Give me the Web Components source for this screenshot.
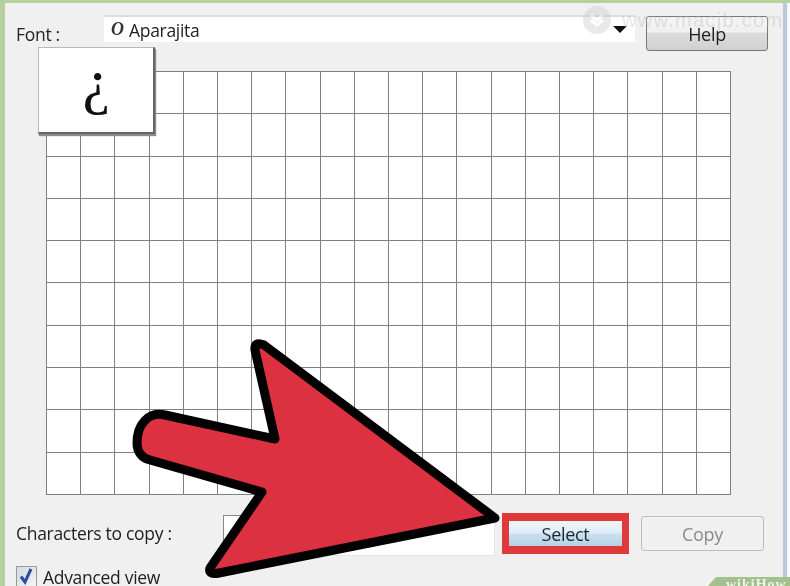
<!DOCTYPE html>
<html><head><meta charset="utf-8"><style>
html,body{margin:0;padding:0;background:#f0f0f0}
</style></head><body>
<char-window></char-window>
<template id="btn"><style>
:host{display:flex;align-items:center;justify-content:center;box-sizing:border-box;font:18px/16px "Open Sans","Noto Sans",sans-serif;color:#222;letter-spacing:-.3px;
border:1.5px solid #777;border-radius:3px;background:linear-gradient(#f4f4f4 0,#f0f0f0 45%,#dcdcdc 50%,#d0d0d0 100%)}
:host([disabled]){color:#8a8a8a;border-color:#bdbdbd;background:#f0f0f0}
:host([active]){border:0;border-radius:0;color:#1c2733;background:linear-gradient(#eef5fa 0,#dfeef7 45%,#c8dfee 55%,#b4d2e6 100%)}
</style><slot></slot></template>
<script>
function def(name,html){customElements.define(name,class extends HTMLElement{constructor(){super();const s=this.attachShadow({mode:'open'});s.innerHTML=html;}});}
customElements.define('win-button',class extends HTMLElement{constructor(){super();this.attachShadow({mode:'open'}).append(document.getElementById('btn').content.cloneNode(true));}});
customElements.define('char-grid',class extends HTMLElement{constructor(){super();const s=this.attachShadow({mode:'open'});
s.innerHTML=`<style>:host{display:grid;box-sizing:border-box;width:685px;height:424px;grid-template-columns:repeat(20,1fr);grid-template-rows:repeat(10,1fr);border-left:1.5px solid #808080;border-top:1.5px solid #808080;background:#fff}
i{display:block;border-right:1.5px solid #808080;border-bottom:1.5px solid #808080}</style>`+'<i></i>'.repeat(200);}});
def('font-select',`<style>:host{display:flex;align-items:center;box-sizing:border-box;width:531px;height:27px;background:#fff;border-top:2px solid #dcdcdc;padding:0 7px;font:17.5px "Open Sans","Noto Sans",sans-serif;color:#222;letter-spacing:-.3px}
b{font:italic bold 18px "Liberation Serif",serif;width:16px;color:#333;margin-top:-1px}
span{flex:1;margin-left:2px}
svg{display:block}</style><b>O</b><span>Aparajita</span><svg width="16" height="9" viewBox="0 0 16 9"><path d="M1 1H15L8 8Z" fill="#111"/></svg>`);
def('check-box',`<style>:host{display:inline-block;box-sizing:border-box;width:21px;height:21px;border:1.5px solid #9a9a9a;background:linear-gradient(135deg,#d4d8de,#f4f4f4)}svg{display:block}</style>
<svg width="18" height="18" viewBox="0 0 18 18"><path d="M4 9.5L8 15L14 2" fill="none" stroke="#2a4f9e" stroke-width="3"/></svg>`);
def('char-zoom',`<style>:host{position:absolute;left:38px;top:47px;box-sizing:border-box;width:117px;height:87px;background:#fff;border:1px solid #b8b8b8;border-right:2px solid #666;border-bottom:2px solid #666;box-shadow:1px 2px 1px #8a8a8a;display:flex;align-items:center;justify-content:center;font:62px/62px "Liberation Serif",serif;color:#111;padding-bottom:18px}</style>¿`);
def('big-arrow',`<style>:host{position:absolute;left:0;top:0;width:790px;height:586px;pointer-events:none}svg{display:block}</style>
<svg width="790" height="586" viewBox="0 0 790 586"><path d="M255 350Q254 341 264 345L495 518L219 573Q208 575 210 568L262 492L150 460C142 458 137 452 137 443C137 425 148 411 165 415L275 439Z" fill="#db3140" stroke="#000" stroke-width="9" stroke-linejoin="round"/></svg>`);
def('water-mark',`<style>:host{position:absolute;left:583px;top:6px;display:flex;align-items:center;gap:11px;opacity:.36;color:#b8b8b8;font:20px/10px "Liberation Sans",sans-serif;letter-spacing:1.3px}svg{display:block}</style>
<svg width="28" height="28" viewBox="0 0 28 28"><circle cx="14" cy="14" r="14" fill="#c4c4c4"/><path d="M8 9l6 5 6-5M8 14l6 5 6-5" fill="none" stroke="#fff" stroke-width="3"/></svg><span>www.macjb.com</span>`);
def('wiki-corner',`<style>:host{position:absolute;right:0;bottom:0;width:82px;height:9px;background:#a3c08e;clip-path:polygon(8px 0,100% 0,100% 100%,0 100%);color:#eef5e8;font:bold 14px "Liberation Serif",serif;overflow:hidden;padding-left:18px;box-sizing:border-box;letter-spacing:1px}</style>wikiHow`);
def('char-window',`<style>
:host{display:flex;flex-direction:column;position:relative;box-sizing:border-box;width:790px;height:586px;overflow:hidden;background:#f0f0f0;padding:15px 0 0 16px;font:17.5px "Open Sans","Noto Sans",sans-serif;color:#222;letter-spacing:-.3px;filter:blur(.35px)}
.t{position:absolute;left:0;top:0;right:0;height:3px;background:#b6d0a2}
.l{position:absolute;left:0;top:0;bottom:0;width:5px;background:#b6d0a2}
.r{position:absolute;left:783px;top:3px;bottom:0;width:4px;background:#b9c9dc}
.r2{position:absolute;left:787px;top:3px;bottom:0;width:3px;background:#f8f8f8}
.top{display:flex;flex:none;height:56px;align-items:flex-start}
.lab{width:88px;margin-top:7px}
win-button.help{width:122px;height:35px;margin:1px 0 0 11px}
char-grid{margin-left:30px;flex:none}
.bot{display:flex;flex:none;margin-top:18px;height:41px;align-items:flex-start}
.bl{width:207px;margin-top:8px}
.inp{box-sizing:border-box;width:272px;height:41px;margin-top:2px;background:#fff;border-top:1.5px solid #888;border-left:1.5px solid #888;border-right:1px solid #e6e6e6;border-bottom:1px solid #e6e6e6;}
.red{box-sizing:border-box;width:127px;height:41px;margin-left:7px;border:solid #e0393a;border-width:8px 7px;display:flex}
.red win-button{flex:1}
.copy{width:123px;height:35px;margin:3px 0 0 12px}
.chk{display:flex;flex:none;align-items:center;gap:6px;margin-top:12px;height:21px}
</style>
<div class="t"></div><div class="l"></div><div class="r"></div><div class="r2"></div>
<div class="top"><div class="lab">Font :</div><font-select></font-select><win-button class="help">Help</win-button></div>
<char-grid></char-grid>
<div class="bot"><div class="bl">Characters to copy :</div><div class="inp"></div><div class="red"><win-button active>Select</win-button></div><win-button class="copy" disabled>Copy</win-button></div>
<div class="chk"><check-box></check-box><span>Advanced view</span></div>
<char-zoom></char-zoom><water-mark></water-mark><big-arrow></big-arrow><wiki-corner></wiki-corner>`);
</script></body></html>
